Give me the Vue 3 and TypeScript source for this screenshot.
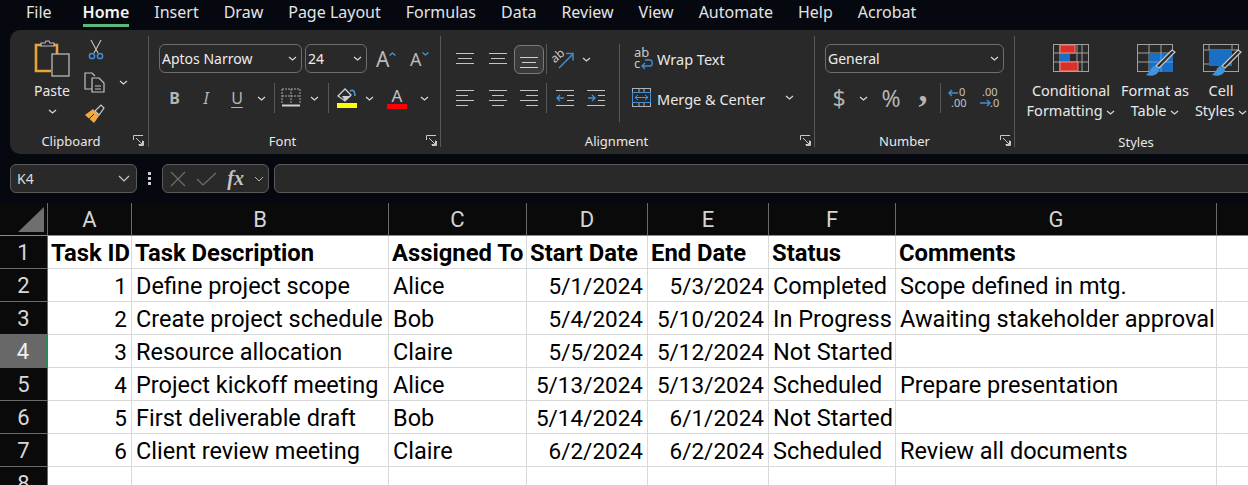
<script setup lang="ts">
const tabs = ['File', 'Home', 'Insert', 'Draw', 'Page Layout', 'Formulas', 'Data', 'Review', 'View', 'Automate', 'Help', 'Acrobat']
const columns = ['A', 'B', 'C', 'D', 'E', 'F', 'G', '']

interface Row {
  id: string
  desc: string
  who: string
  start: string
  end: string
  status: string
  note: string
}

const rows: Row[] = [
  { id: '1', desc: 'Define project scope', who: 'Alice', start: '5/1/2024', end: '5/3/2024', status: 'Completed', note: 'Scope defined in mtg.' },
  { id: '2', desc: 'Create project schedule', who: 'Bob', start: '5/4/2024', end: '5/10/2024', status: 'In Progress', note: 'Awaiting stakeholder approval' },
  { id: '3', desc: 'Resource allocation', who: 'Claire', start: '5/5/2024', end: '5/12/2024', status: 'Not Started', note: '' },
  { id: '4', desc: 'Project kickoff meeting', who: 'Alice', start: '5/13/2024', end: '5/13/2024', status: 'Scheduled', note: 'Prepare presentation' },
  { id: '5', desc: 'First deliverable draft', who: 'Bob', start: '5/14/2024', end: '6/1/2024', status: 'Not Started', note: '' },
  { id: '6', desc: 'Client review meeting', who: 'Claire', start: '6/2/2024', end: '6/2/2024', status: 'Scheduled', note: 'Review all documents' },
  { id: '', desc: '', who: '', start: '', end: '', status: '', note: '' }
]

const headings = ['Task ID', 'Task Description', 'Assigned To', 'Start Date', 'End Date', 'Status', 'Comments', '']
</script>

<template>
  <div class="app">
    <nav class="tabs">
      <span v-for="t in tabs" :key="t" class="tab" :class="{ active: t === 'Home', file: t === 'File' }">{{ t }}</span>
    </nav>

    <section class="ribbon">
      <!-- Clipboard -->
      <div class="group clipboard">
        <div class="clip-body">
          <div class="paste">
            <svg width="36" height="38" viewBox="0 0 36 38">
              <path d="M8 6H2v26h15" fill="none" stroke="#e8a33a" stroke-width="2.6" />
              <path d="M17 6h6v9" fill="none" stroke="#e8a33a" stroke-width="2.6" />
              <path d="M7 7V4h4l1-2h3l1 2h4v3z" fill="#292929" stroke="#b9b9b9" stroke-width="1.2" />
              <rect x="18" y="15" width="17" height="22" fill="#292929" stroke="#b9b9b9" stroke-width="1.3" />
            </svg>
            <span class="paste-text">Paste</span>
            <svg class="chev" width="9" height="5" viewBox="0 0 9 5"><path d="M1 1l3.5 3L8 1" /></svg>
          </div>
          <div class="clip-tools">
            <svg width="16" height="22" viewBox="0 0 16 22">
              <path d="M3 1l7 13M13 1L6 14" fill="none" stroke="#bdbdbd" stroke-width="1.2" />
              <circle cx="4" cy="17" r="2.6" fill="none" stroke="#3f8fd2" stroke-width="1.5" />
              <circle cx="12" cy="17" r="2.6" fill="none" stroke="#3f8fd2" stroke-width="1.5" />
            </svg>
            <div class="copy-row">
              <svg width="21" height="21" viewBox="0 0 21 21">
                <path d="M8 17H1V1h7l3 3" fill="none" stroke="#c4c4c4" stroke-width="1.2" />
                <path d="M8 6h7l5 5v9H8z" fill="#292929" stroke="#c4c4c4" stroke-width="1.2" />
                <path d="M11 14h6M11 17h6" stroke="#c4c4c4" />
              </svg>
              <svg class="chev" width="9" height="5" viewBox="0 0 9 5"><path d="M1 1l3.5 3L8 1" /></svg>
            </div>
            <svg width="21" height="20" viewBox="0 0 21 20">
              <path d="M1 11l8-6 6 7-5 7z" fill="#eeaa45" />
              <path d="M5 15l5-5" stroke="#292929" />
              <path d="M11 7l6-6 3 3-5 7z" fill="#292929" stroke="#c9c9c9" stroke-width="1.2" />
            </svg>
          </div>
        </div>
        <footer class="foot">
          Clipboard
          <svg class="launch" width="11" height="11" viewBox="0 0 11 11"><path d="M.5 5V.5h9.6M10.500 6v4.500H6M3 3l6.500 6.500M9.500 5.500v4H5.500" fill="none" stroke="#c9c9c9" /></svg>
        </footer>
      </div>

      <!-- Font -->
      <div class="group font">
        <div class="font-top">
          <div class="combo name"><span>Aptos Narrow</span><svg class="chev" width="9" height="5" viewBox="0 0 9 5"><path d="M1 1l3.5 3L8 1" /></svg></div>
          <div class="combo size"><span>24</span><svg class="chev" width="9" height="5" viewBox="0 0 9 5"><path d="M1 1l3.5 3L8 1" /></svg></div>
          <span class="grow-btn">A<svg width="7" height="4" viewBox="0 0 7 4"><path d="M.5 3.500l3-2.500 3 2.500" fill="none" stroke="#4a9ad8" stroke-width="1.2" /></svg></span>
          <span class="grow-btn small">A<svg width="7" height="4" viewBox="0 0 7 4"><path d="M.5.5l3 2.500 3-2.500" fill="none" stroke="#4a9ad8" stroke-width="1.2" /></svg></span>
        </div>
        <div class="font-row">
          <b class="fmt">B</b>
          <i class="fmt serifish">I</i>
          <span class="fmt under">U</span>
          <svg class="chev" width="9" height="5" viewBox="0 0 9 5"><path d="M1 1l3.5 3L8 1" /></svg>
          <span class="vsep"></span>
          <svg width="20" height="20" viewBox="0 0 20 20">
            <path d="M1 1h18M1 1v14M19 1v14M10 1v14M1 8h18" fill="none" stroke="#aaa" stroke-dasharray="2 1" />
            <path d="M1 17.500h18" stroke="#d0d0d0" stroke-width="2" />
          </svg>
          <svg class="chev" width="9" height="5" viewBox="0 0 9 5"><path d="M1 1l3.5 3L8 1" /></svg>
          <span class="vsep"></span>
          <div class="paint">
            <svg width="20" height="15" viewBox="0 0 20 15">
              <path d="M1 8l7-7 6 6-6 6z" fill="none" stroke="#d0d0d0" stroke-width="1.3" />
              <path d="M5 8h9l-6 5z" fill="#d0d0d0" />
              <path d="M13 3c3-2 5 0 5 5" fill="none" stroke="#4a9ad8" stroke-width="1.6" />
            </svg>
            <span class="swatch yellow"></span>
          </div>
          <svg class="chev" width="9" height="5" viewBox="0 0 9 5"><path d="M1 1l3.5 3L8 1" /></svg>
          <div class="paint">
            <span class="color-a">A</span>
            <span class="swatch red"></span>
          </div>
          <svg class="chev" width="9" height="5" viewBox="0 0 9 5"><path d="M1 1l3.5 3L8 1" /></svg>
        </div>
        <footer class="foot">
          Font
          <svg class="launch" width="11" height="11" viewBox="0 0 11 11"><path d="M.5 5V.5h9.600M10.500 6v4.500H6M3 3l6.500 6.500M9.500 5.500v4H5.500" fill="none" stroke="#c9c9c9" /></svg>
        </footer>
      </div>

      <!-- Alignment -->
      <div class="group alignment">
        <div class="align-body">
          <div class="align-left">
            <div class="align-top">
              <svg width="18" height="12" viewBox="0 0 18 12"><path d="M0 .5h18M2 5.500h14M0 10.500h18" stroke="#c4c4c4" /></svg>
              <svg width="18" height="12" viewBox="0 0 18 12"><path d="M0 .5h18M2 5.500h14M0 10.500h18" stroke="#c4c4c4" /></svg>
              <span class="pressed"><svg width="18" height="12" viewBox="0 0 18 12"><path d="M0 .5h18M2 5.500h14M0 10.500h18" stroke="#d0d0d0" /></svg></span>
              <span class="vsep"></span>
              <svg width="22" height="22" viewBox="0 0 22 22">
                <text x="0" y="12" transform="rotate(-40 6 10)" class="svg-label small">ab</text>
                <path d="M7 20L20 7M14 5.500h7v7" fill="none" stroke="#3f8fd2" stroke-width="1.5" />
              </svg>
              <svg class="chev" width="9" height="5" viewBox="0 0 9 5"><path d="M1 1l3.5 3L8 1" /></svg>
            </div>
            <div class="align-bottom">
              <svg width="18" height="18" viewBox="0 0 18 18"><path d="M0 1.500h18M0 6.500h12M0 11.500h18M0 16.500h12" stroke="#c4c4c4" /></svg>
              <svg width="18" height="18" viewBox="0 0 18 18"><path d="M0 1.500h18M3 6.500h12M0 11.500h18M3 16.500h12" stroke="#c4c4c4" /></svg>
              <svg width="18" height="18" viewBox="0 0 18 18"><path d="M0 1.500h18M6 6.500h12M0 11.500h18M6 16.500h12" stroke="#c4c4c4" /></svg>
              <span class="vsep"></span>
              <svg width="18" height="18" viewBox="0 0 18 18">
                <path d="M0 1.500h18M11 6.500h7M11 11.500h7M0 16.500h18" stroke="#c4c4c4" />
                <path d="M8 9H1M4 6L1 9l3 3" fill="none" stroke="#3f8fd2" stroke-width="1.4" />
              </svg>
              <svg width="18" height="18" viewBox="0 0 18 18">
                <path d="M0 1.500h18M11 6.500h7M11 11.500h7M0 16.500h18" stroke="#c4c4c4" />
                <path d="M1 9h7M5 6l3 3-3 3" fill="none" stroke="#3f8fd2" stroke-width="1.4" />
              </svg>
            </div>
          </div>
          <span class="tall-sep"></span>
          <div class="align-right">
            <div class="wrap-row">
              <svg width="19" height="22" viewBox="0 0 19 22">
                <text x="0" y="9" class="svg-label">ab</text>
                <text x="0" y="20" class="svg-label">c</text>
                <path d="M11 12h5c3 0 3 6 0 6H8M11 15l-3 3 3 3" fill="none" stroke="#3f8fd2" stroke-width="1.3" />
              </svg>
              <span>Wrap Text</span>
            </div>
            <div class="merge-row">
              <svg width="19" height="19" viewBox="0 0 19 19">
                <rect x=".5" y=".5" width="18" height="18" fill="none" stroke="#b0b0b0" />
                <path d="M.5 5h18M.5 14h18M7 .5V5M12 .5V5M7 14v4.500M12 14v4.500" stroke="#b0b0b0" />
                <rect x=".5" y="4.500" width="18" height="10" fill="#292929" stroke="#3f8fd2" />
                <path d="M3 9.500h13M6 7L3 9.500 6 12M13 7l3 2.500-3 2.500" fill="none" stroke="#4a9ad8" />
              </svg>
              <span class="merge-text">Merge &amp; Center</span>
              <svg class="chev merge-chev" width="9" height="5" viewBox="0 0 9 5"><path d="M1 1l3.5 3L8 1" /></svg>
            </div>
          </div>
        </div>
        <footer class="foot">
          Alignment
          <svg class="launch" width="11" height="11" viewBox="0 0 11 11"><path d="M.5 5V.5h9.600M10.500 6v4.500H6M3 3l6.500 6.500M9.500 5.500v4H5.500" fill="none" stroke="#c9c9c9" /></svg>
        </footer>
      </div>

      <!-- Number -->
      <div class="group number">
        <div class="combo general"><span>General</span><svg class="chev" width="9" height="5" viewBox="0 0 9 5"><path d="M1 1l3.5 3L8 1" /></svg></div>
        <div class="number-row">
          <span class="num dollar">$</span>
          <svg class="chev" width="9" height="5" viewBox="0 0 9 5"><path d="M1 1l3.5 3L8 1" /></svg>
          <span class="num">%</span>
          <span class="num comma">,</span>
          <span class="vsep"></span>
          <svg width="20" height="20" viewBox="0 0 20 20">
            <text x="11" y="8" class="svg-num">0</text>
            <text x="3" y="19" class="svg-num">.00</text>
            <path d="M10 5H1M4 2L1 5l3 3" fill="none" stroke="#3f8fd2" stroke-width="1.4" />
          </svg>
          <svg width="20" height="20" viewBox="0 0 20 20">
            <text x="3" y="8" class="svg-num">.00</text>
            <text x="11" y="19" class="svg-num">.0</text>
            <path d="M1 15h10M8 12l3 3-3 3" fill="none" stroke="#3f8fd2" stroke-width="1.4" />
          </svg>
        </div>
        <footer class="foot">
          Number
          <svg class="launch" width="11" height="11" viewBox="0 0 11 11"><path d="M.5 5V.5h9.600M10.500 6v4.500H6M3 3l6.500 6.500M9.500 5.500v4H5.500" fill="none" stroke="#c9c9c9" /></svg>
        </footer>
      </div>

      <!-- Styles -->
      <div class="group styles">
        <div class="styles-body">
          <div class="style-btn cf">
            <svg class="big" width="36" height="34" viewBox="0 0 36 34">
              <rect x=".5" y=".5" width="35" height="27" fill="none" stroke="#a0a0a0" />
              <path d="M7 0v28M24 0v28M29 0v28M0 9h36M0 18h36" stroke="#a0a0a0" />
              <rect x="7" y="1" width="15" height="8" fill="#d9302a" stroke="#f08a85" />
              <rect x="7" y="10" width="10" height="7" fill="#1a6fc4" />
              <rect x="7" y="18" width="18" height="9" fill="#d9302a" stroke="#f08a85" />
            </svg>
            <span>Conditional</span>
            <span>Formatting <svg class="chev" width="9" height="5" viewBox="0 0 9 5"><path d="M1 1l3.500 3L8 1" /></svg></span>
          </div>
          <div class="style-btn ft">
            <svg class="big" width="40" height="34" viewBox="0 0 40 34">
              <rect x=".5" y=".5" width="35" height="27" fill="none" stroke="#a0a0a0" />
              <path d="M12 0v28M24 0v28M0 9h36M0 18h36" stroke="#a0a0a0" />
              <rect x="12" y="9" width="24" height="19" fill="#1a6fc4" />
              <path d="M12 18h24M24 9v19" stroke="#5d9fdc" />
              <path d="M38 8L22 24l-3-2L35 6z" fill="#292929" stroke="#c9c9c9" stroke-width="1.2" />
              <path d="M18 22c-4 0-4 5-9 9 6 2 13 0 13-6z" fill="#3f94de" />
            </svg>
            <span>Format as</span>
            <span>Table <svg class="chev" width="9" height="5" viewBox="0 0 9 5"><path d="M1 1l3.500 3L8 1" /></svg></span>
          </div>
          <div class="style-btn cs">
            <svg class="big" width="40" height="34" viewBox="0 0 40 34">
              <rect x=".5" y=".5" width="35" height="27" fill="none" stroke="#a0a0a0" />
              <path d="M6 0v6M29 0v6M0 6h36M0 20h6" stroke="#a0a0a0" />
              <rect x="6" y="6" width="23" height="16" fill="#1a6fc4" />
              <path d="M38 8L22 24l-3-2L35 6z" fill="#292929" stroke="#c9c9c9" stroke-width="1.2" />
              <path d="M18 22c-4 0-4 5-9 9 6 2 13 0 13-6z" fill="#3f94de" />
            </svg>
            <span>Cell</span>
            <span>Styles <svg class="chev" width="9" height="5" viewBox="0 0 9 5"><path d="M1 1l3.500 3L8 1" /></svg></span>
          </div>
        </div>
        <footer class="foot styles-foot">Styles</footer>
      </div>
    </section>

    <section class="formula">
      <div class="box namebox">
        <span>K4</span>
        <svg width="12" height="7" viewBox="0 0 12 7"><path d="M1 1l5 5 5-5" fill="none" stroke="#c9c9c9" stroke-width="1.2" /></svg>
      </div>
      <div class="dots"><i></i><i></i><i></i></div>
      <div class="box fxbox">
        <svg width="16" height="16" viewBox="0 0 16 16"><path d="M1 1l14 14M15 1L1 15" stroke="#6e6e6e" stroke-width="1.2" /></svg>
        <svg width="21" height="14" viewBox="0 0 21 14"><path d="M1 7l6 6L20 1" fill="none" stroke="#6e6e6e" stroke-width="1.2" /></svg>
        <span class="fx">fx</span>
        <svg width="10" height="6" viewBox="0 0 10 6"><path d="M1 1l4 4 4-4" fill="none" stroke="#b5b5b5" /></svg>
      </div>
      <div class="box input"></div>
    </section>

    <section class="sheet">
      <div class="corner"><span class="triangle"></span></div>
      <div v-for="c in columns" :key="c" class="col-head">{{ c }}</div>

      <div class="row-head">1</div>
      <div v-for="h in headings" :key="h" class="cell bold">{{ h }}</div>

      <template v-for="(r, i) in rows" :key="i">
        <div class="row-head" :class="{ selected: i === 2 }">{{ i + 2 }}</div>
        <div class="cell right">{{ r.id }}</div>
        <div class="cell">{{ r.desc }}</div>
        <div class="cell">{{ r.who }}</div>
        <div class="cell right">{{ r.start }}</div>
        <div class="cell right">{{ r.end }}</div>
        <div class="cell">{{ r.status }}</div>
        <div class="cell">{{ r.note }}</div>
        <div class="cell"></div>
      </template>
    </section>
  </div>
</template>

<style>
html,
body {
  margin: 0;
  background: #05080f;
  overflow: hidden;
}
</style>

<style scoped>
.app {
  width: 1248px;
  height: 485px;
  overflow: hidden;
  background: #05080f;
  font-family: "Noto Sans", "Open Sans", sans-serif;
  color: #e8e8e8;
}

svg {
  display: block;
  flex: none;
  overflow: visible;
}

.tabs {
  display: flex;
  gap: 25px;
  height: 30px;
  padding-left: 26px;
  align-items: flex-start;
  font-size: 16px;
  line-height: 24px;
}

.tab {
  color: #e4e4e4;
  white-space: nowrap;
}

.tab.file {
  margin-right: 6px;
}

.tab.active {
  color: #f4f4f4;
  font-weight: 600;
  height: 27px;
  border-bottom: 3px solid #5cb87c;
  box-sizing: border-box;
}

.ribbon {
  display: flex;
  width: 1270px;
  height: 124px;
  margin-left: 10px;
  padding-top: 6px;
  box-sizing: border-box;
  background: #292929;
  border-radius: 10px;
  overflow: hidden;
}

.group {
  display: flex;
  flex-direction: column;
  flex: none;
  height: 111px;
  padding-top: 8px;
  box-sizing: border-box;
  border-right: 1px solid #585858;
}

.clipboard { width: 139px; }
.font { width: 292px; padding-left: 10px; }
.alignment { width: 374px; padding-left: 8px; }
.number { width: 200px; padding-left: 10px; }
.styles { width: 242px; padding-left: 12px; border-right: none; }

.foot {
  position: relative;
  top: 1px;
  height: 14px;
  margin-top: auto;
  line-height: 14px;
  font-size: 13px;
  text-align: center;
  color: #e8e8e8;
}

.launch {
  position: absolute;
  right: 3px;
  top: 1px;
}

.clipboard .foot { padding-right: 16px; }
.clipboard .launch { right: 4px; }
.font .foot { margin-left: -10px; padding-right: 24px; }
.alignment .foot { margin-left: -8px; padding-right: 22px; }
.number .foot { margin-left: -10px; padding-right: 20px; }
.styles .foot { margin-left: -12px; top: 2px; }

.chev {
  fill: none;
  stroke: #d8d8d8;
  stroke-width: 1.2;
}

/* clipboard */
.clip-body {
  display: flex;
  padding-left: 24px;
  margin-top: -5px;
}

.paste {
  display: flex;
  flex-direction: column;
  align-items: center;
  width: 36px;
}

.paste-text {
  font-size: 14px;
  line-height: 20px;
  margin-top: 4px;
  white-space: nowrap;
}

.paste .chev { margin-top: 8px; }

.clip-tools {
  display: flex;
  flex-direction: column;
  align-items: flex-start;
  gap: 11px;
  margin-left: 14px;
}

.clip-tools > svg:first-child { margin-left: 4px; }

.copy-row {
  display: flex;
  align-items: center;
  gap: 14px;
}

/* font */
.font-top {
  display: flex;
  align-items: center;
}

.combo {
  display: flex;
  align-items: center;
  justify-content: space-between;
  height: 29px;
  box-sizing: border-box;
  padding: 0 4px 0 2px;
  border: 1px solid #6e6e6e;
  border-radius: 6px;
  font-size: 14px;
  color: #ececec;
}

.combo.name { width: 143px; margin-right: 3px; }
.combo.size { width: 62px; }
.combo.general { width: 179px; }

.grow-btn {
  display: flex;
  align-items: flex-start;
  width: 22px;
  margin-left: 9px;
  font-size: 21px;
  line-height: 26px;
  color: #b9b9b9;
}

.grow-btn svg { margin-top: 6px; }
.grow-btn.small { font-size: 18px; margin-left: 12px; }

.font-row {
  display: grid;
  grid-template-columns: 31px 32px 30px 18px 8px 26px 20px 8px 30px 14px 42px 12px;
  align-items: center;
  justify-items: center;
  height: 30px;
  margin-top: 10px;
}

.fmt {
  font-size: 16px;
  color: #b5b5b5;
}

.fmt.under {
  text-decoration: underline;
  text-underline-offset: 3px;
}

.vsep {
  display: block;
  width: 1px;
  height: 30px;
  background: #585858;
}

.paint {
  display: flex;
  flex-direction: column;
  align-items: center;
  width: 20px;
}

.color-a {
  font-size: 17px;
  line-height: 16px;
  color: #c4c4c4;
}

.swatch {
  display: block;
  width: 20px;
  height: 5px;
}

.yellow { background: #ffff00; }
.red { background: #ff0000; }

/* alignment */
.align-body {
  display: flex;
}

.align-left {
  width: 163px;
}

.align-top {
  display: grid;
  grid-template-columns: 32px 33px 30px 5px 28px 18px;
  align-items: center;
  justify-items: center;
  height: 29px;
}

.pressed {
  display: flex;
  align-items: flex-end;
  justify-content: center;
  width: 30px;
  height: 29px;
  padding-bottom: 4px;
  box-sizing: border-box;
  border: 1px solid #7a7a7a;
  border-radius: 6px;
  background: #3a3a3a;
}

.align-bottom {
  display: grid;
  grid-template-columns: 32px 33px 30px 5px 31px 32px;
  align-items: center;
  justify-items: center;
  height: 30px;
  margin-top: 10px;
}

.tall-sep {
  width: 1px;
  height: 78px;
  margin-left: 7px;
  background: #585858;
}

.align-right {
  font-size: 14.5px;
  white-space: nowrap;
}

.wrap-row,
.merge-row {
  display: flex;
  align-items: center;
  height: 29px;
}

.wrap-row { padding-left: 14px; gap: 4px; }
.merge-row { margin-top: 10px; padding-left: 12px; gap: 6px; }
.merge-text { padding-top: 2px; }
.merge-chev { margin-left: 14px; }

.svg-label {
  font-size: 13px;
  fill: #c9c9c9;
}

.svg-label.small { font-size: 12px; }

.svg-num {
  font-size: 11px;
  fill: #c4c4c4;
}

/* number */
.number-row {
  display: grid;
  grid-template-columns: 28px 20px 36px 28px 6px 30px 32px;
  align-items: center;
  justify-items: center;
  height: 30px;
  margin-top: 10px;
}

.num {
  font-size: 23px;
  line-height: 30px;
  color: #b5b5b5;
}

.comma {
  font-family: "Liberation Serif", serif;
  font-weight: 700;
  font-size: 36px;
  line-height: 22px;
  transform: translateY(-9px);
}

/* styles */
.styles-body {
  display: grid;
  grid-template-columns: 88px 80px 52px;
}

.style-btn {
  display: flex;
  flex-direction: column;
  align-items: center;
  font-size: 14.5px;
  line-height: 20px;
  white-space: nowrap;
}

.big { margin-bottom: 2px; }
.ft .big, .cs .big { margin-left: 4px; }

.style-btn .chev {
  display: inline-block;
  vertical-align: middle;
}

/* formula bar */
.formula {
  display: flex;
  align-items: center;
  height: 29px;
  margin-top: 10px;
  padding-left: 10px;
}

.box {
  display: flex;
  flex: none;
  align-items: center;
  height: 29px;
  box-sizing: border-box;
  border: 1px solid #5a5a5a;
  border-radius: 6px;
  background: #292929;
}

.namebox {
  justify-content: space-between;
  width: 127px;
  padding: 0 6px;
  font-size: 14px;
  color: #dcdcdc;
}

.dots {
  display: flex;
  flex: none;
  flex-direction: column;
  gap: 2px;
  width: 25px;
  align-items: center;
}

.dots i {
  display: block;
  width: 3px;
  height: 3px;
  background: #d0d0d0;
}

.fxbox {
  justify-content: space-between;
  width: 107px;
  padding: 0 4px 0 7px;
}

.fx {
  font-family: "Liberation Serif", serif;
  font-style: italic;
  font-weight: 700;
  font-size: 20px;
  color: #c4c4c4;
}

.input {
  width: 1000px;
  margin-left: 5px;
}

/* sheet */
.sheet {
  display: grid;
  grid-template-columns: 48px 84px 257px 138px 121px 121px 127px 321px 40px;
  grid-auto-rows: 33px;
  margin-top: 10px;
  font-family: Roboto, "Noto Sans", sans-serif;
}

.corner {
  display: flex;
  align-items: flex-end;
  justify-content: flex-end;
  padding: 0 3px 3px 0;
  background: #0a0a0a;
  border-right: 1px solid #6a6a6a;
  border-bottom: 1px solid #8a8a8a;
  box-sizing: border-box;
}

.triangle {
  display: block;
  width: 26px;
  height: 25px;
  background: #6f6f6f;
  clip-path: polygon(100% 0, 100% 100%, 0 100%);
}

.col-head {
  display: flex;
  align-items: center;
  justify-content: center;
  background: #0a0a0a;
  color: #d4d4d4;
  font-size: 22px;
  border-right: 1px solid #6a6a6a;
  border-bottom: 1px solid #8a8a8a;
  box-sizing: border-box;
}

.row-head {
  display: flex;
  align-items: center;
  justify-content: center;
  background: #0a0a0a;
  color: #d8d8d8;
  font-size: 22px;
  border-right: 1px solid #6a6a6a;
  border-bottom: 1px solid #6a6a6a;
  box-sizing: border-box;
}

.row-head.selected {
  background: #686868;
  color: #f0f0f0;
  border-right: 2px solid #2e8b57;
}

.cell {
  display: flex;
  align-items: center;
  padding: 1px 4px 0 4px;
  background: #fff;
  color: #000;
  font-size: 23.5px;
  white-space: nowrap;
  overflow: hidden;
  border-right: 1px solid #d9d9d9;
  border-bottom: 1px solid #d9d9d9;
  box-sizing: border-box;
}

.cell.bold {
  font-weight: 700;
  font-size: 23.8px;
  padding-left: 3px;
}

.cell.right {
  justify-content: flex-end;
  font-size: 22.5px;
  padding-right: 4px;
}
</style>
